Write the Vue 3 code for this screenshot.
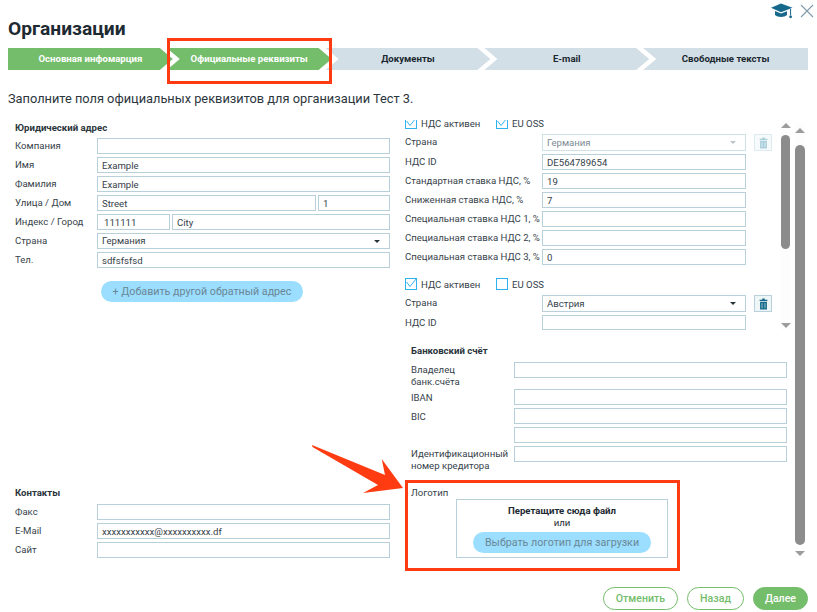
<script setup>
const steps = [
  { label: 'Основная инфомарция', done: true },
  { label: 'Официальные реквизиты', done: true },
  { label: 'Документы', done: false },
  { label: 'E-mail', done: false },
  { label: 'Свободные тексты', done: false }
]
const contacts = [
  { label: 'Факс', value: '' },
  { label: 'E-Mail', value: 'xxxxxxxxxxx@xxxxxxxxxx.df' },
  { label: 'Сайт', value: '' }
]
const rates = [
  { label: 'НДС ID', value: 'DE564789654' },
  { label: 'Стандартная ставка НДС, %', value: '19' },
  { label: 'Сниженная ставка НДС, %', value: '7' },
  { label: 'Специальная ставка НДС 1, %', value: '' },
  { label: 'Специальная ставка НДС 2, %', value: '' },
  { label: 'Специальная ставка НДС 3, %', value: '0' }
]
</script>

<template>
  <div class="page">
    <div class="tools">
      <svg class="cap" viewBox="0 0 22 16" width="22" height="16">
        <path d="M10 0.5 L21.5 4.8 L10 9.2 L0 4.8 Z" fill="#17698b" />
        <path d="M4 8 L10 10.6 L16 8.2 V12 C13.5 14.5 6.5 14.5 4 12 Z" fill="#17698b" />
        <path d="M19.6 6 V12.5" stroke="#17698b" stroke-width="1" />
        <circle cx="19.6" cy="13.8" r="1.4" fill="#17698b" />
      </svg>
      <svg class="close" viewBox="0 0 14 14" width="14" height="14">
        <path d="M1 1 L13 13 M13 1 L1 13" stroke="#7f9aab" stroke-width="1.1" fill="none" />
      </svg>
    </div>

    <h1 class="title">Организации</h1>

    <div class="steps">
      <div v-for="step in steps" :key="step.label" class="step" :class="{ done: step.done }">{{ step.label }}</div>
    </div>

    <p class="intro">Заполните поля официальных реквизитов для организации Тест 3.</p>

    <div class="main">
      <section class="left">
        <h3 class="head">Юридический адрес</h3>
        <div class="row"><span class="lab">Компания</span><input class="inp grow" readonly value="" /></div>
        <div class="row"><span class="lab">Имя</span><input class="inp grow" readonly value="Example" /></div>
        <div class="row"><span class="lab">Фамилия</span><input class="inp grow" readonly value="Example" /></div>
        <div class="row">
          <span class="lab">Улица / Дом</span>
          <input class="inp grow" readonly value="Street" />
          <input class="inp house" readonly value="1" />
        </div>
        <div class="row">
          <span class="lab">Индекс / Город</span>
          <input class="inp zip" readonly value="111111" />
          <input class="inp grow" readonly value="City" />
        </div>
        <div class="row">
          <span class="lab">Страна</span>
          <div class="inp sel grow">Германия<i class="caret"></i></div>
        </div>
        <div class="row"><span class="lab">Тел.</span><input class="inp grow" readonly value="sdfsfsfsd" /></div>
        <button class="pill add">+ Добавить другой обратный адрес</button>

        <div class="contacts">
          <h3 class="head contacts-head">Контакты</h3>
          <div v-for="c in contacts" :key="c.label" class="row">
            <span class="lab">{{ c.label }}</span><input class="inp grow" readonly :value="c.value" />
          </div>
        </div>
      </section>

      <section class="right">
        <div class="vat-box">
          <div class="vat-list">
            <div class="vat-inner">
              <div class="checks">
                <span class="box on"><svg viewBox="0 0 12 12" width="12" height="12"><path d="M1.5 4 L5 8.5 L11.5 0.5" fill="none" stroke="#2fb2ee" stroke-width="1" /></svg></span>
                <span class="chk-a">НДС активен</span>
                <span class="box on"><svg viewBox="0 0 12 12" width="12" height="12"><path d="M1.5 4 L5 8.5 L11.5 0.5" fill="none" stroke="#2fb2ee" stroke-width="1" /></svg></span>
                <span class="chk-b">EU OSS</span>
              </div>
              <div class="vrow tall">
                <span class="vlab">Страна</span>
                <div class="inp sel vinp disabled">Германия<i class="caret light"></i></div>
                <span class="trash off">
                  <svg viewBox="0 0 10 14" width="9" height="12"><path d="M3.5 0.5 H6.5 V2 H9.5 V3.5 H0.5 V2 H3.5 Z M1 4.5 H9 V13.5 H1 Z" fill="#a8cddb" /><path d="M3.3 6 V12 M6.7 6 V12" stroke="#e4f1f6" stroke-width="1" /></svg>
                </span>
              </div>
              <div v-for="r in rates" :key="r.label" class="vrow">
                <span class="vlab">{{ r.label }}</span>
                <input class="inp vinp" readonly :value="r.value" />
              </div>
              <div class="checks second">
                <span class="box on"><svg viewBox="0 0 12 12" width="12" height="12"><path d="M1.5 4 L5 8.5 L11.5 0.5" fill="none" stroke="#2fb2ee" stroke-width="1" /></svg></span>
                <span class="chk-a">НДС активен</span>
                <span class="box"></span>
                <span class="chk-b">EU OSS</span>
              </div>
              <div class="vrow tall">
                <span class="vlab">Страна</span>
                <div class="inp sel vinp">Австрия<i class="caret"></i></div>
                <span class="trash">
                  <svg viewBox="0 0 10 14" width="9" height="12"><path d="M3.5 0.5 H6.5 V2 H9.5 V3.5 H0.5 V2 H3.5 Z M1 4.5 H9 V13.5 H1 Z" fill="#17698b" /><path d="M3.3 6 V12 M6.7 6 V12" stroke="#a9cfdd" stroke-width="1" /></svg>
                </span>
              </div>
              <div class="vrow">
                <span class="vlab">НДС ID</span>
                <input class="inp vinp short" readonly value="" />
              </div>
            </div>
          </div>
          <div class="scroll inner-scroll">
            <i class="arrow up"></i>
            <i class="thumb inner-thumb"></i>
            <i class="arrow down"></i>
          </div>
        </div>

        <div class="bank">
          <h3 class="head bank-head">Банковский счёт</h3>
          <div class="brow first"><span class="blab">Владелец<br />банк.счёта</span><input class="inp grow" readonly value="" /></div>
          <div class="brow"><span class="blab one">IBAN</span><input class="inp grow" readonly value="" /></div>
          <div class="brow"><span class="blab one">BIC</span><input class="inp grow" readonly value="" /></div>
          <div class="brow"><span class="blab"></span><input class="inp grow" readonly value="" /></div>
          <div class="brow"><span class="blab">Идентификационный<br />номер кредитора</span><input class="inp grow" readonly value="" /></div>
        </div>

        <div class="logo">
          <span class="logo-lab">Логотип</span>
          <div class="drop">
            <strong class="drop-t">Перетащите сюда файл</strong>
            <span class="drop-o">или</span>
            <button class="pill pick">Выбрать логотип для загрузки</button>
          </div>
        </div>
      </section>

      <div class="scroll outer-scroll">
        <i class="arrow up"></i>
        <i class="thumb outer-thumb"></i>
        <i class="arrow down"></i>
      </div>
    </div>

    <div class="footer">
      <button class="btn ghost cancel">Отменить</button>
      <button class="btn ghost back">Назад</button>
      <button class="btn next">Далее</button>
    </div>

    <div class="mark mark-steps"></div>
    <div class="mark mark-logo"></div>
    <svg class="pointer" viewBox="0 0 120 70" width="120" height="70">
      <polygon points="12,10 85,40 81.7,24 103,53 63,58 78,50 12.5,12" fill="#ff3b12" />
    </svg>
  </div>
</template>

<style>
html, body { margin: 0; background: #fff; }
</style>

<style scoped>
.page {
  position: relative;
  width: 817px;
  height: 612px;
  overflow: hidden;
  box-sizing: border-box;
  padding: 0 9px 0 8px;
  background: #fff;
  font-family: Roboto, "Liberation Sans", sans-serif;
  font-size: 9.6px;
  color: #36424a;
}
.tools {
  display: flex;
  justify-content: flex-end;
  align-items: center;
  gap: 7px;
  height: 14px;
  padding-top: 4px;
  margin-right: -6px;
}
.title {
  margin: 0 0 8px;
  height: 22px;
  line-height: 22px;
  font-size: 19.2px;
  font-weight: 700;
  color: #1d2a32;
}
.steps { display: flex; height: 22px; }
.step {
  flex: 0 0 164.8px;
  margin-left: -6px;
  height: 22px;
  line-height: 22px;
  text-align: center;
  font-size: 9.6px;
  font-weight: 700;
  color: #1b2831;
  background: #d3dfe6;
  clip-path: polygon(0 0, calc(100% - 13px) 0, 100% 50%, calc(100% - 13px) 100%, 0 100%, 13px 50%);
}
.step:first-child {
  margin-left: 0;
  clip-path: polygon(0 0, calc(100% - 13px) 0, 100% 50%, calc(100% - 13px) 100%, 0 100%);
}
.step:last-child {
  clip-path: polygon(0 0, 100% 0, 100% 100%, 0 100%, 13px 50%);
}
.step.done { background: #74bd6b; color: #fff; }
.intro {
  margin: 21px 0 15px;
  height: 16px;
  line-height: 16px;
  font-size: 12.8px;
  color: #2c363d;
}
.main { display: flex; height: 436px; }
.left {
  display: flex;
  flex-direction: column;
  width: 375px;
  margin-left: 7px;
}
.head {
  margin: 0 0 3px;
  height: 13px;
  line-height: 12px;
  font-size: 9.6px;
  font-weight: 700;
  color: #2a343b;
}
.row { display: flex; gap: 2px; height: 16px; margin-bottom: 3px; }
.lab { flex: 0 0 80px; min-width: 0; line-height: 15px; }
.inp {
  box-sizing: border-box;
  height: 16px;
  min-width: 0;
  margin: 0;
  padding: 0 4px;
  border: 1px solid #b7d0da;
  outline: none;
  background: #fff;
  font: inherit;
  line-height: 14px;
  color: #36424a;
}
.grow { flex: 1 1 0; width: 0; }
.house { flex: 0 0 72px; width: 72px; }
.zip { flex: 0 0 73px; width: 73px; padding-left: 6px; }
.sel { position: relative; }
.caret {
  position: absolute;
  right: 9px;
  top: 6px;
  border-left: 3px solid transparent;
  border-right: 3px solid transparent;
  border-top: 3px solid #26333b;
}
.caret.light { border-top-color: #b8c4ca; }
.pill {
  border: 0;
  border-radius: 11px;
  background: #9bdeff;
  color: #6a8795;
  font-family: inherit;
  padding: 0;
}
.add {
  align-self: flex-start;
  width: 202px;
  height: 21px;
  margin: 10px 0 0 86px;
  font-size: 10.7px;
}
.contacts { margin-top: auto; }
.contacts .row:last-child { margin-bottom: 0; }
.contacts-head { margin-bottom: 4px; }
.right {
  display: flex;
  flex-direction: column;
  width: 385px;
  margin-left: 15px;
}
.vat-box { display: flex; height: 210px; margin-top: -2px; }
.vat-list { width: 376px; height: 210px; overflow: hidden; }
.vat-inner { margin-top: -3px; }
.checks { display: flex; align-items: center; height: 12px; margin-bottom: 5px; }
.checks.second { margin-top: 13px; }
.box {
  box-sizing: border-box;
  flex: 0 0 12px;
  width: 12px;
  height: 12px;
  border: 1px solid #2fb2ee;
  position: relative;
  overflow: visible;
}
.box svg { position: absolute; left: -1px; top: -1px; }
.chk-a { width: 75px; margin-left: 4px; }
.chk-b { margin-left: 4px; }
.vrow { display: flex; height: 16px; margin-bottom: 3px; }
.vrow.tall { height: 17px; }
.vrow.tall .inp { height: 17px; line-height: 15px; }
.vlab { flex: 0 0 137px; min-width: 0; line-height: 15px; white-space: nowrap; }
.vinp { width: 204px; flex: 0 0 204px; }
.vinp.short { height: 15px; }
.disabled { color: #7d8b93; border-color: #cfe0e6; }
.trash {
  box-sizing: border-box;
  display: flex;
  align-items: center;
  justify-content: center;
  width: 18px;
  height: 17px;
  margin-left: 8px;
  border: 1px solid #b7d0da;
  background: #eef6f8;
}
.trash.off { border-color: #dcebf0; background: #f6fafb; }
.scroll {
  display: flex;
  flex-direction: column;
  align-items: center;
  background: #fdfdfd;
}
.inner-scroll { width: 9px; }
.arrow { display: block; width: 0; height: 0; border-left: 5px solid transparent; border-right: 5px solid transparent; }
.arrow.up { border-bottom: 5px solid #9c9c9c; }
.arrow.down { border-top: 5px solid #9c9c9c; }
.thumb { display: block; width: 9px; background: #8c8c8c; border-radius: 5px; }
.inner-scroll .up { margin-top: 3px; }
.inner-thumb { height: 114px; margin: 7px 0 74px; }
.outer-scroll { width: 10px; margin-left: 5px; height: 436px; }
.outer-scroll .up { margin-top: 6px; }
.outer-thumb { width: 10px; height: 400px; margin: 12px 0 6px; }
.bank { margin-top: 15px; padding-left: 6px; }
.bank-head { margin-bottom: 4px; }
.brow { display: flex; height: 16px; margin-bottom: 3px; padding-right: 3px; }
.brow.first { height: 24px; }
.brow .inp { height: 16px; }
.blab { flex: 0 0 103px; min-width: 0; line-height: 12px; margin-top: 2px; white-space: nowrap; }
.blab.one { line-height: 14px; }
.logo {
  display: flex;
  margin-top: 22px;
  padding-left: 6px;
}
.logo-lab { flex: 0 0 45px; height: 12px; line-height: 12px; }
.drop {
  box-sizing: border-box;
  display: flex;
  flex-direction: column;
  align-items: center;
  width: 212px;
  height: 59px;
  margin-top: 12px;
  padding-top: 4px;
  border: 1px solid #b7d0da;
}
.drop-t { height: 13px; line-height: 13px; font-weight: 700; color: #1d2a32; }
.drop-o { height: 12px; line-height: 11px; color: #1d2a32; }
.pick { width: 178px; height: 21px; margin-top: 3px; font-size: 10.7px; }
.footer {
  display: flex;
  justify-content: flex-end;
  gap: 9px;
  margin-top: 29px;
}
.btn {
  box-sizing: border-box;
  height: 23px;
  border-radius: 12px;
  border: 1px solid #74bd6b;
  background: #fff;
  color: #74bd6b;
  font-family: inherit;
  font-size: 10.6px;
  font-weight: 500;
  padding: 0;
}
.cancel { width: 75px; }
.back { width: 57px; }
.next { width: 55px; background: #74bd6b; color: #fff; }
.mark {
  position: absolute;
  box-sizing: border-box;
  border: 3px solid #ff3b12;
  pointer-events: none;
}
.mark-steps { left: 167px; top: 38px; width: 165px; height: 46px; }
.mark-logo { left: 405px; top: 480px; width: 275px; height: 91px; }
.pointer { position: absolute; left: 300px; top: 435px; pointer-events: none; }
</style>
